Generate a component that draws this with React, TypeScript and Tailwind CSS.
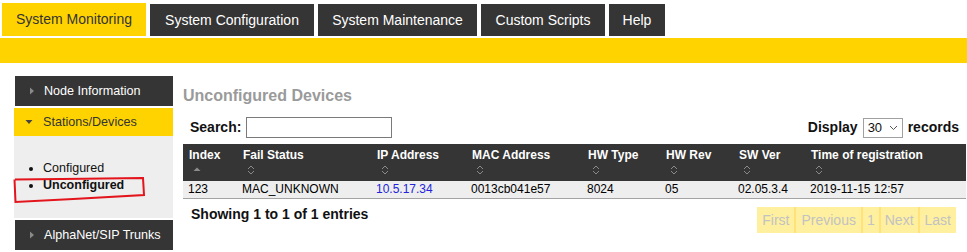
const tabs = [
  { label: 'System Monitoring', w: 'w-[144px]', active: true },
  { label: 'System Configuration', w: 'w-[164px]' },
  { label: 'System Maintenance', w: 'w-[159px]' },
  { label: 'Custom Scripts', w: 'w-[124px]' },
  { label: 'Help', w: 'w-[56px]' },
];

const columns = [
  { label: 'Index', w: 'w-[54px]', sorted: true },
  { label: 'Fail Status', w: 'w-[134px]' },
  { label: 'IP Address', w: 'w-[95px]' },
  { label: 'MAC Address', w: 'w-[116px]' },
  { label: 'HW Type', w: 'w-[78px]' },
  { label: 'HW Rev', w: 'w-[73px]' },
  { label: 'SW Ver', w: 'w-[72px]' },
  { label: 'Time of registration', w: 'w-[161px]' },
];

const row = ['123', 'MAC_UNKNOWN', '10.5.17.34', '0013cb041e57', '8024', '05', '02.05.3.4', '2019-11-15 12:57'];

function SortIcon({ sorted }: { sorted?: boolean }) {
  if (sorted) {
    return (
      <svg width="8" height="9" viewBox="0 0 8 9">
        <polygon points="0.5,6 4,2.5 7.5,6" fill="#8c8c8c" />
      </svg>
    );
  }
  return (
    <svg width="8" height="10" viewBox="0 0 8 10" fill="none" stroke="#8a8a8a" strokeWidth="1">
      <path d="M1 4 L4 1 L7 4" />
      <path d="M1 6 L4 9 L7 6" />
    </svg>
  );
}

function SideItem({ label, open }: { label: string; open?: boolean }) {
  if (open) {
    return (
      <div className="h-[28px] bg-[#ffd300] flex items-center pl-[11px] gap-[10px] text-[#333] text-[12.6px]">
        <svg width="8" height="6" viewBox="0 0 8 6">
          <polygon points="0.5,1 7.5,1 4,5" fill="#444" />
        </svg>
        <span>{label}</span>
      </div>
    );
  }
  return (
    <div className="ml-[1px] h-[30px] bg-[#353535] flex items-center pl-[15px] gap-[10px] text-white text-[12.6px]">
      <svg width="4" height="8" viewBox="0 0 4 8">
        <polygon points="0,0.5 4,4 0,7.5" fill="#8a8a8a" />
      </svg>
      <span>{label}</span>
    </div>
  );
}

export default function App() {
  return (
    <div className="w-[967px] h-[252px] overflow-hidden bg-white font-['Liberation_Sans',Arial,sans-serif]">
      <div className="flex items-start gap-[4px] pl-[2px] pt-[3px] h-[38px]">
        {tabs.map((t) =>
          t.active ? (
            <div key={t.label} className={`${t.w} h-[33px] bg-[#ffd300] text-[#333] text-[14px] flex items-center justify-center`}>
              {t.label}
            </div>
          ) : (
            <div key={t.label} className={`${t.w} mt-[1px] h-[32px] bg-[#353535] text-white text-[14px] flex items-center justify-center`}>
              {t.label}
            </div>
          )
        )}
      </div>
      <div className="h-[25px] bg-[#ffd300]" />

      <div className="flex mt-[13px] pl-[14px] gap-[10px]">
        <div className="w-[159px] flex flex-col relative">
          <SideItem label="Node Information" />
          <div className="mt-[2px]">
            <SideItem label="Stations/Devices" open />
          </div>
          <div className="h-[82px] bg-[#eeeeee] pt-[24px] text-[12.5px] leading-[17px] text-[#111]">
            <ul className="list-disc pl-[29px]">
              <li>Configured</li>
              <li className="font-bold">Unconfigured</li>
            </ul>
          </div>
          <div className="mt-[2px]">
            <SideItem label="AlphaNet/SIP Trunks" />
          </div>
          <svg
            className="absolute left-[-1px] top-[101px]"
            width="134"
            height="27"
            viewBox="0 0 134 27"
            fill="none"
            stroke="#e3141b"
            strokeWidth="2"
          >
            <path d="M2 2.5 C 40 2, 90 1.5, 130 1 L131 18 C 100 20, 40 23, 2.5 25 L1.5 2.5" />
          </svg>
        </div>

        <div className="flex-1 mr-[1px] pt-[10px]">
          <h1 className="text-[16px] leading-[20px] font-bold text-[#9a9a9a]">Unconfigured Devices</h1>
          <div className="mt-[11px] h-[21px] flex items-center justify-between pl-[7px] pr-[7px] text-[14px] font-bold text-[#111]">
            <label className="flex items-center gap-[5px]">
              <span>Search:</span>
              <input className="w-[146px] h-[21px] border border-[#7a7a7a] bg-white" />
            </label>
            <div className="flex items-center gap-[5px]">
              <span>Display</span>
              <div className="w-[40px] h-[20px] border border-[#a0a0a0] flex items-center justify-between pl-[4px] pr-[4px] font-normal text-[13px]">
                <span>30</span>
                <svg width="9" height="6" viewBox="0 0 9 6" fill="none" stroke="#555" strokeWidth="1">
                  <path d="M1 1 L4.5 4.5 L8 1" />
                </svg>
              </div>
              <span>records</span>
            </div>
          </div>

          <table className="mt-[6px] w-full table-fixed border-collapse text-[12px]">
            <thead>
              <tr className="bg-[#353535] text-white">
                {columns.map((c) => (
                  <th key={c.label} className={`${c.w} text-left font-bold align-top pl-[6px] pt-[3px] h-[37px]`}>
                    <div className="leading-[16px] whitespace-nowrap">{c.label}</div>
                    <div className="pl-[4px] mt-[2px] h-[12px]">
                      <SortIcon sorted={c.sorted} />
                    </div>
                  </th>
                ))}
              </tr>
            </thead>
            <tbody>
              <tr className="bg-[#eeeeee] border-b border-[#a3a3a3]">
                {row.map((v, i) => (
                  <td
                    key={i}
                    className={`pl-[5px] h-[17px] leading-[17px] whitespace-nowrap ${i === 2 ? 'text-[#2323dc]' : 'text-black'}`}
                  >
                    {v}
                  </td>
                ))}
              </tr>
            </tbody>
          </table>

          <div className="mt-[8px] flex items-start justify-between pl-[8px] pr-[10px]">
            <span className="-mt-[1px] text-[14px] leading-[16px] font-bold text-[#111]">Showing 1 to 1 of 1 entries</span>
            <div className="flex h-[26px] text-[14px] text-[#c2c2c2] bg-[#fff0a0]">
              <span className="px-[5px] flex items-center">First</span>
              <span className="px-[5px] flex items-center border-l-2 border-[#ffe37a]">Previous</span>
              <span className="px-[4px] flex items-center border-l-2 border-[#ffe37a]">1</span>
              <span className="px-[4px] flex items-center border-l-2 border-[#ffe37a]">Next</span>
              <span className="px-[5px] flex items-center border-l-2 border-[#ffe37a]">Last</span>
            </div>
          </div>
        </div>
      </div>
    </div>
  );
}
